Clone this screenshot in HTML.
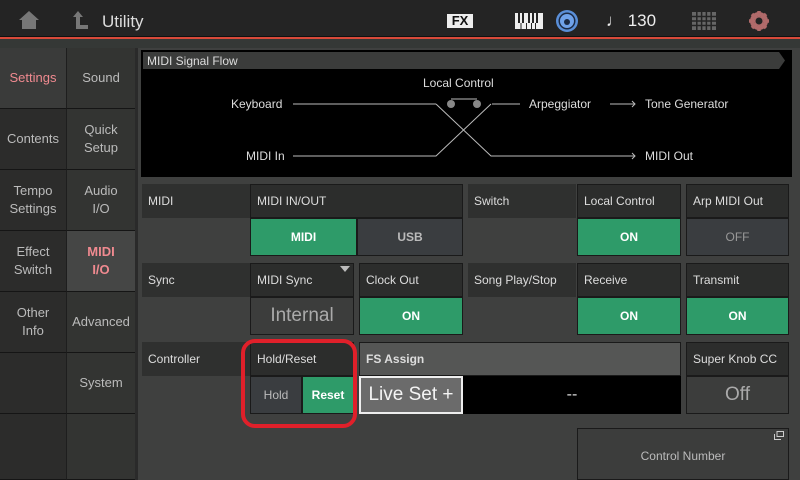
<!DOCTYPE html>
<html><head><meta charset="utf-8"><style>
*{margin:0;padding:0;box-sizing:border-box}
body{width:800px;height:480px;background:#3f403f;font-family:"Liberation Sans",sans-serif;overflow:hidden;position:relative;color:#ddd}
.a{position:absolute}
.top{left:0;top:0;width:800px;height:36px;background:#242424}
.red{left:0;top:36px;width:800px;height:3px;background:#d84a3a;border-top:1px solid #111}
.band{left:0;top:39px;width:800px;height:9px;background:#353836}
.side{font-size:13px;color:#bbb;display:flex;align-items:center;justify-content:center;text-align:center;line-height:18px;border-bottom:1px solid #151515}
.c1{left:0;width:67px;background:#2c2c2b;border-right:1px solid #1e1e1e}
.c2{left:67px;width:68px;background:#333432}
.lbl{background:#2f302f;font-size:12px;color:#ddd;padding-left:6px;display:flex;align-items:center}
.hdr{background:#2c2d2c;font-size:12px;color:#ddd;padding-left:6px;display:flex;align-items:center;border:1px solid #1a1a1a}
.btn{display:flex;align-items:center;justify-content:center;font-size:12px;font-weight:bold;border:1px solid #1a1a1a}
.on{background:#2e9b69;color:#fff}
.off{background:#3a3d40;color:#bbb}
.val{background:#3c3d3c;color:#aaa;display:flex;align-items:center;justify-content:center;font-size:19px;border:1px solid #1a1a1a}
</style></head><body>
<div class="a top"></div>
<svg class="a" style="left:18px;top:10px" width="22" height="20"><path d="M11 1 L21 10 L18 10 L18 19 L4 19 L4 10 L1 10 Z" fill="#777"/></svg>
<svg class="a" style="left:70px;top:10px" width="20" height="20"><path d="M3 7 L8 1 L13 7 L10 7 L10 15 L18 15 L18 19 L6 19 L6 7 Z" fill="#777"/></svg>
<div class="a" style="left:102px;top:12px;font-size:17px;color:#ddd">Utility</div>
<div class="a" style="left:447px;top:14px;width:26px;height:14px;background:#eee;color:#111;font-weight:bold;font-size:13px;line-height:14px;text-align:center">FX</div>
<svg class="a" style="left:515px;top:13px" width="28" height="16"><rect width="28" height="16" fill="#eee"/><g fill="#222"><rect x="3" y="0" width="2" height="10"/><rect x="7" y="0" width="2" height="10"/><rect x="13" y="0" width="2" height="10"/><rect x="17" y="0" width="2" height="10"/><rect x="21" y="0" width="2" height="10"/><rect x="5.5" y="10" width="1" height="6"/><rect x="11" y="10" width="1" height="6"/><rect x="16" y="10" width="1" height="6"/><rect x="20" y="10" width="1" height="6"/></g></svg>
<svg class="a" style="left:555px;top:9px" width="24" height="24"><circle cx="12" cy="12" r="11" fill="#5a8fd8"/><circle cx="12" cy="12" r="8.5" fill="#1b2a44"/><circle cx="12" cy="12" r="7" fill="#6fa2ea"/><circle cx="12" cy="13" r="3" fill="#1b2a44"/></svg>
<div class="a" style="left:606px;top:11px;font-size:17px;color:#eee">♩ 130</div>
<svg class="a" style="left:692px;top:12px" width="24" height="18"><rect width="24" height="18" fill="#666"/><g stroke="#242424" stroke-width="1.5"><path d="M0 4.5H24M0 9H24M0 13.5H24M4.8 0V18M9.6 0V18M14.4 0V18M19.2 0V18"/></g></svg>
<svg class="a" style="left:749px;top:11px" width="20" height="20"><circle cx="10" cy="10" r="7" fill="none" stroke="#b06a6a" stroke-width="4"/><g stroke="#b06a6a" stroke-width="3.5"><path d="M10 0V20M0 10H20M3 3L17 17M17 3L3 17"/></g><circle cx="10" cy="10" r="3.5" fill="#242424"/></svg>
<div class="a red"></div>
<div class="a band"></div>

<div class="a side c1" style="top:48px;height:61px;background:#3a3b3a;color:#f08a90">Settings</div>
<div class="a side c1" style="top:109px;height:61px">Contents</div>
<div class="a side c1" style="top:170px;height:61px">Tempo<br>Settings</div>
<div class="a side c1" style="top:231px;height:61px">Effect<br>Switch</div>
<div class="a side c1" style="top:292px;height:61px">Other<br>Info</div>
<div class="a side c1" style="top:353px;height:61px"></div>
<div class="a side c1" style="top:414px;height:66px"></div>
<div class="a side c2" style="top:48px;height:61px">Sound</div>
<div class="a side c2" style="top:109px;height:61px">Quick<br>Setup</div>
<div class="a side c2" style="top:170px;height:61px">Audio<br>I/O</div>
<div class="a side c2" style="top:231px;height:61px;background:#454645;color:#f08a90;font-weight:bold">MIDI<br>I/O</div>
<div class="a side c2" style="top:292px;height:61px">Advanced</div>
<div class="a side c2" style="top:353px;height:61px">System</div>
<div class="a side c2" style="top:414px;height:66px"></div>
<div class="a" style="left:135px;top:48px;width:3px;height:432px;background:#2a2a2a"></div>

<div class="a" style="left:141px;top:50px;width:651px;height:127px;background:#000"></div>
<svg class="a" style="left:143px;top:52px" width="642" height="17"><path d="M0 0H636L642 8.5L636 17H0Z" fill="#3b3c3b"/><text x="4" y="13" font-size="12" fill="#ddd" font-family="Liberation Sans">MIDI Signal Flow</text></svg>
<svg class="a" style="left:141px;top:70px" width="651" height="105">
<g font-family="Liberation Sans" font-size="12" fill="#ddd">
<text x="282" y="17">Local Control</text>
<text x="90" y="38">Keyboard</text>
<text x="105" y="90">MIDI In</text>
<text x="388" y="38">Arpeggiator</text>
<text x="504" y="38">Tone Generator</text>
<text x="504" y="90">MIDI Out</text>
</g>
<g stroke="#bbb" stroke-width="1" fill="none">
<path d="M152 34H295M351 34H379M469 34H494M491 31L494 34L491 37"/>
<path d="M152 86H295L350 34M295 34L350 86H494M491 83L494 86L491 89"/>
<path d="M310 29H336"/>
</g>
<circle cx="310" cy="34" r="4" fill="#888"/><circle cx="336" cy="34" r="4" fill="#888"/>
</svg>

<div class="a lbl" style="left:142px;top:184px;width:108px;height:34px">MIDI</div>
<div class="a hdr" style="left:250px;top:184px;width:213px;height:34px">MIDI IN/OUT</div>
<div class="a btn on" style="left:250px;top:218px;width:107px;height:38px">MIDI</div>
<div class="a btn off" style="left:357px;top:218px;width:106px;height:38px">USB</div>
<div class="a lbl" style="left:468px;top:184px;width:108px;height:34px">Switch</div>
<div class="a hdr" style="left:577px;top:184px;width:104px;height:34px">Local Control</div>
<div class="a btn on" style="left:577px;top:218px;width:104px;height:38px">ON</div>
<div class="a hdr" style="left:686px;top:184px;width:103px;height:34px">Arp MIDI Out</div>
<div class="a btn off" style="left:686px;top:218px;width:103px;height:38px;font-weight:normal;color:#999">OFF</div>

<div class="a lbl" style="left:142px;top:263px;width:108px;height:34px">Sync</div>
<div class="a hdr" style="left:250px;top:263px;width:104px;height:34px">MIDI Sync</div>
<svg class="a" style="left:340px;top:266px" width="10" height="6"><path d="M0 0H10L5 6Z" fill="#bbb"/></svg>
<div class="a val" style="left:250px;top:297px;width:104px;height:38px">Internal</div>
<div class="a hdr" style="left:359px;top:263px;width:104px;height:34px">Clock Out</div>
<div class="a btn on" style="left:359px;top:297px;width:104px;height:38px">ON</div>
<div class="a lbl" style="left:468px;top:263px;width:108px;height:34px">Song Play/Stop</div>
<div class="a hdr" style="left:577px;top:263px;width:104px;height:34px">Receive</div>
<div class="a btn on" style="left:577px;top:297px;width:104px;height:38px">ON</div>
<div class="a hdr" style="left:686px;top:263px;width:103px;height:34px">Transmit</div>
<div class="a btn on" style="left:686px;top:297px;width:103px;height:38px">ON</div>

<div class="a lbl" style="left:142px;top:342px;width:108px;height:34px">Controller</div>
<div class="a hdr" style="left:250px;top:342px;width:104px;height:34px">Hold/Reset</div>
<div class="a btn off" style="left:250px;top:376px;width:52px;height:38px;font-weight:normal">Hold</div>
<div class="a btn on" style="left:302px;top:376px;width:52px;height:38px">Reset</div>
<div class="a" style="left:241px;top:339px;width:116px;height:89px;border:4px solid #e0202a;border-radius:14px"></div>
<div class="a hdr" style="left:359px;top:342px;width:322px;height:34px;background:#555655;font-weight:bold">FS Assign</div>
<div class="a" style="left:359px;top:376px;width:104px;height:38px;background:#6b6b6b;border:2px solid #eee;color:#f4f4f4;font-size:19px;display:flex;align-items:center;justify-content:center">Live Set +</div>
<div class="a" style="left:463px;top:376px;width:218px;height:38px;background:#000;color:#ddd;font-size:16px;display:flex;align-items:center;justify-content:center">--</div>
<div class="a hdr" style="left:686px;top:342px;width:103px;height:34px">Super Knob CC</div>
<div class="a val" style="left:686px;top:376px;width:103px;height:38px">Off</div>

<div class="a" style="left:577px;top:428px;width:212px;height:52px;background:#3c3d3c;border:1px solid #1a1a1a;color:#bbb;font-size:12px;display:flex;align-items:center;justify-content:center;padding-top:4px">Control Number</div>
<svg class="a" style="left:774px;top:431px" width="10" height="9"><rect x="3" y="0.5" width="6.5" height="5" fill="none" stroke="#ccc"/><path d="M0.5 3V8.5H7" fill="none" stroke="#ccc"/></svg>
</body></html>
